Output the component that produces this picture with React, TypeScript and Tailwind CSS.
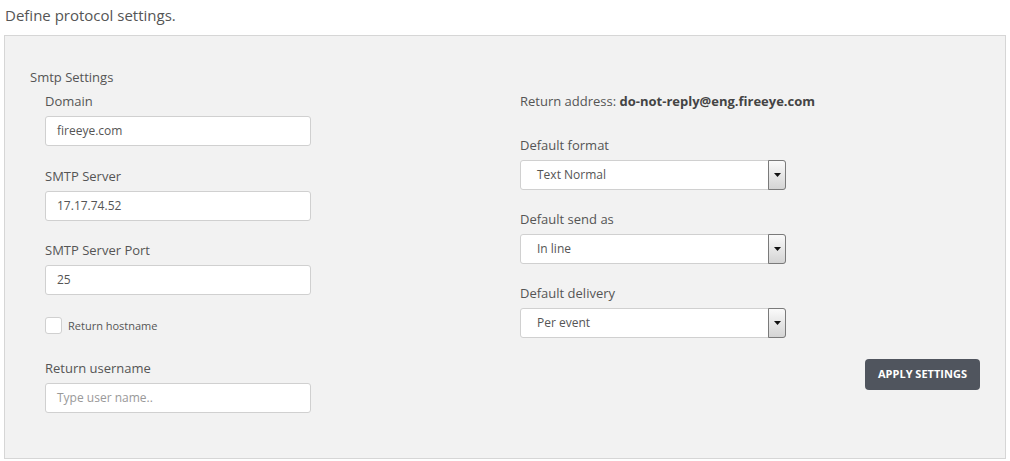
import React from "react";

const font = { fontFamily: '"Open Sans", "Noto Sans", sans-serif' };

function Field({ label, value, placeholder, className = "" }: { label: string; value?: string; placeholder?: string; className?: string }) {
  return (
    <div className={className}>
      <div className="text-[13px] leading-[18px] text-[#555]">{label}</div>
      <div className="mt-[6px] flex h-[30px] w-[266px] items-center rounded-[3px] border border-[#d0d0d0] bg-white pl-[11px] text-[12px]">
        {value ? (
          <span className="text-[#555]">{value}</span>
        ) : (
          <span className="text-[#999]">{placeholder}</span>
        )}
      </div>
    </div>
  );
}

function Select({ label, value, className = "" }: { label: string; value: string; className?: string }) {
  return (
    <div className={className}>
      <div className="text-[13px] leading-[18px] text-[#555]">{label}</div>
      <div className="relative mt-[6px] flex h-[30px] w-[266px] items-center rounded-[3px] border border-[#d0d0d0] bg-white pl-[16px] text-[12px] text-[#555]">
        <span>{value}</span>
        <div className="absolute -right-px -top-px flex h-[30px] w-[18px] items-center justify-center rounded-r-[3px] border border-[#7a7a7a] bg-gradient-to-b from-[#fafafa] to-[#d4d4d4]">
          <svg width="7" height="4" viewBox="0 0 7 4">
            <path d="M0 0 H7 L3.5 4 Z" fill="#111" />
          </svg>
        </div>
      </div>
    </div>
  );
}

export default function App() {
  return (
    <div className="min-h-[461px] bg-white" style={font}>
      <div className="pl-[5px] pt-[5px] text-[15px] leading-[20px] text-[#555]">Define protocol settings.</div>
      <div className="ml-[4px] mt-[10px] w-[1002px] border border-[#d6d6d6] bg-[#f2f2f2] pb-[45px] pl-[25px] pt-[32px]">
        <div className="text-[13px] leading-[18px] text-[#555]">Smtp Settings</div>
        <div className="mt-[6px] flex">
          <div className="w-[490px] pl-[15px]">
            <Field label="Domain" value="fireeye.com" />
            <Field label="SMTP Server" value="17.17.74.52" className="mt-[21px]" />
            <Field label="SMTP Server Port" value="25" className="mt-[20px]" />
            <div className="mt-[21px] flex h-[18px] items-center">
              <div className="h-[17px] w-[17px] rounded-[3px] border border-[#d0d0d0] bg-white" />
              <span className="ml-[6px] mt-[2px] text-[11px] text-[#555]">Return hostname</span>
            </div>
            <Field label="Return username" placeholder="Type user name.." className="mt-[25px]" />
          </div>
          <div className="flex w-[460px] flex-col">
            <div className="text-[13px] leading-[18px] text-[#555]">
              Return address: <span className="font-bold text-[#444]">do-not-reply@eng.fireeye.com</span>
            </div>
            <Select label="Default format" value="Text Normal" className="mt-[26px]" />
            <Select label="Default send as" value="In line" className="mt-[20px]" />
            <Select label="Default delivery" value="Per event" className="mt-[20px]" />
            <div className="mt-[21px] flex justify-end">
              <button className="h-[31px] w-[115px] rounded-[4px] bg-[#50555e] text-[11px] font-bold text-white">
                APPLY SETTINGS
              </button>
            </div>
          </div>
        </div>
      </div>
    </div>
  );
}
